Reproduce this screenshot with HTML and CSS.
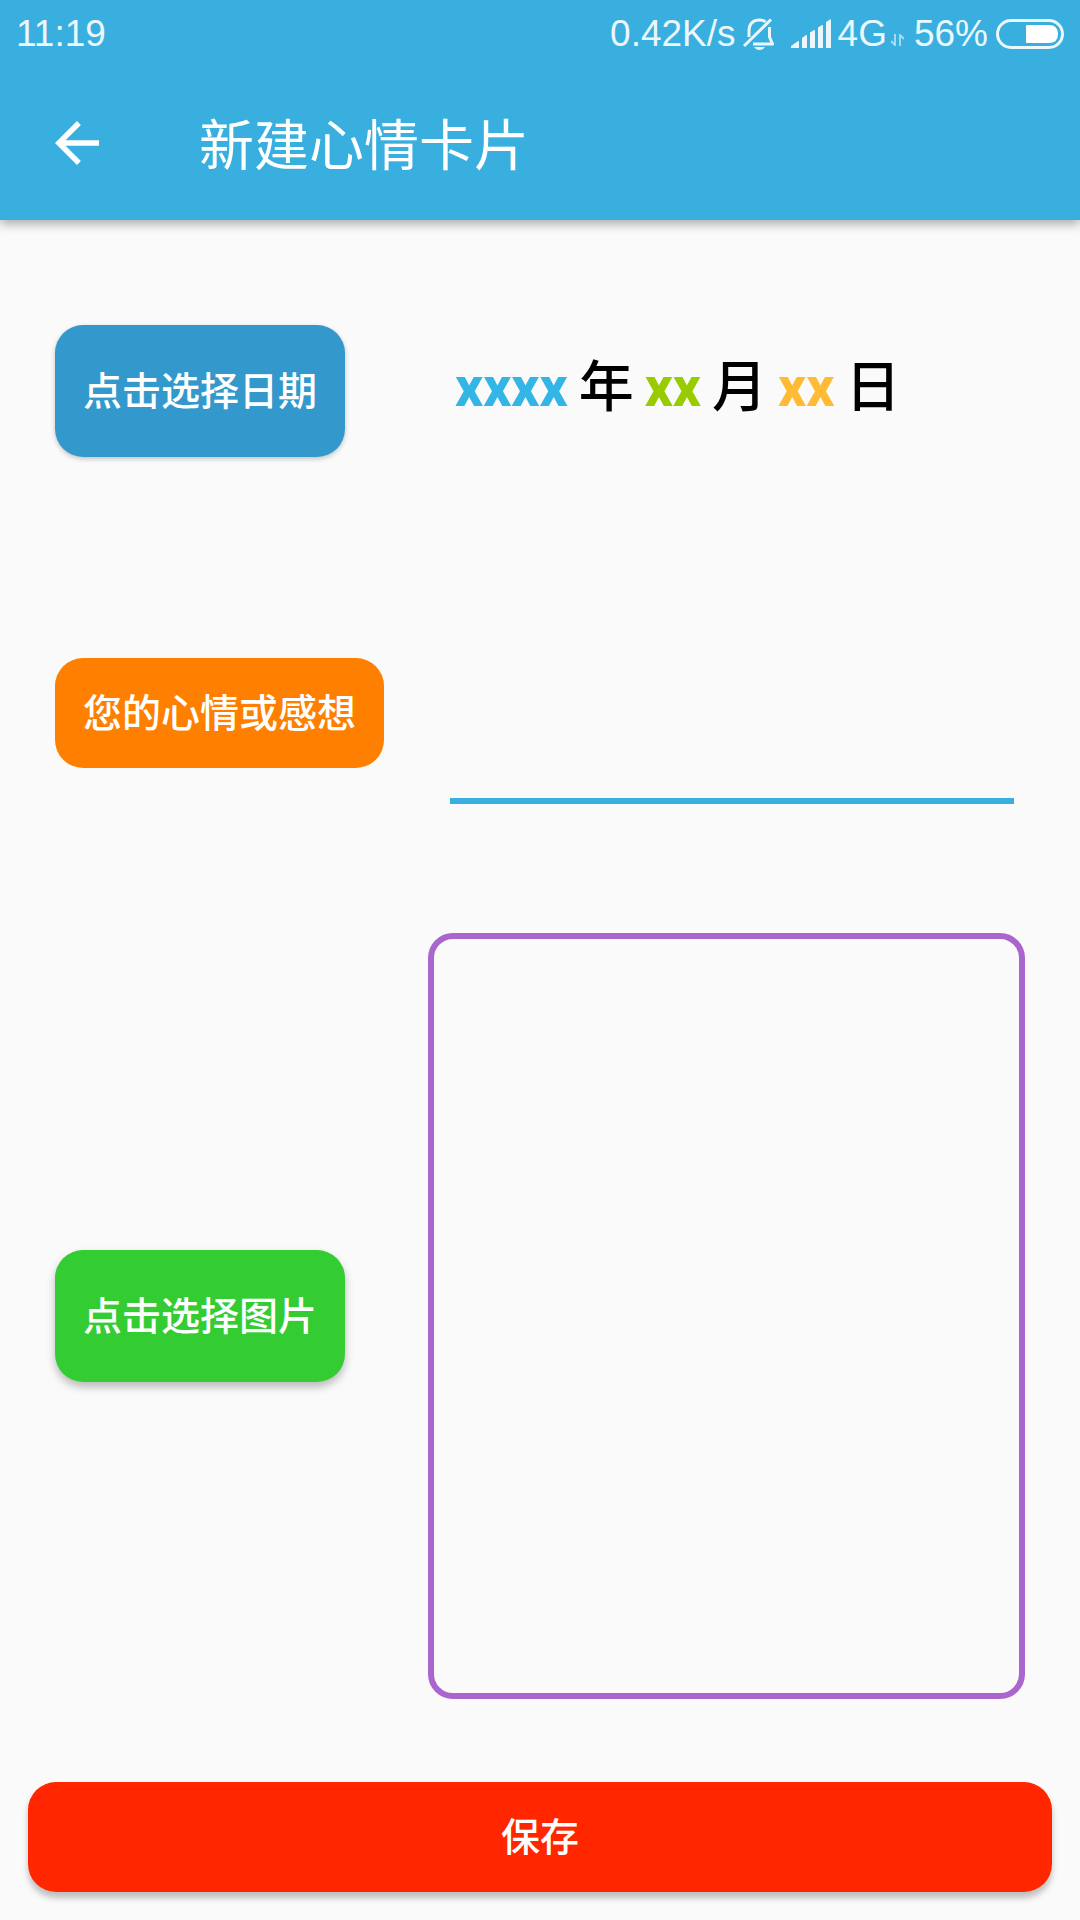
FILE: index.html
```html
<!DOCTYPE html>
<html lang="zh-CN">
<head>
<meta charset="utf-8">
<meta name="viewport" content="width=device-width, initial-scale=1">
<title>新建心情卡片</title>
<link rel="stylesheet" href="styles.css">
</head>
<body>
<header class="app-bar">
  <div class="status-bar">
    <time class="clock">11:19</time>
    <div class="indicators">
      <span>0.42K/s</span>
      <svg class="bell" width="32" height="32" viewBox="0 0 32 32" fill="none" stroke="currentColor" stroke-width="3" aria-hidden="true">
        <path d="M6 19V13C6 6 10 2 16.500 2C19 2 21 2.500 22.500 4M26.500 9V19L29.500 26H10" stroke-linejoin="round"/>
        <path d="M1 28L28 1.500"/>
        <path d="M11 29H22Q20 32 16.500 32Q13 32 11 29Z" fill="currentColor" stroke="none"/>
      </svg>
      <svg class="signal" width="40" height="30" viewBox="0 0 40 30" fill="currentColor" aria-hidden="true">
        <path d="M0 29V27L7 22Q8 22 8 23V29ZM11 29V19L15 16Q16 16 16 17V29ZM19 29V13.500L23 11Q24 10.500 24 12V29ZM27 29V8.500L31 6Q32 5.500 32 7V29ZM35 29V3L39 .5Q40 0 40 1V29Z"/>
      </svg>
      <span>4G</span>
      <svg class="data" width="13" height="12" viewBox="0 0 13 12" fill="none" stroke="currentColor" stroke-width="2" aria-hidden="true">
        <path d="M4 0V11L0 7M9 12V1L13 5"/>
      </svg>
      <span>56%</span>
      <svg class="battery" width="68" height="30" viewBox="0 0 68 30" aria-hidden="true">
        <rect x="1.500" y="1.500" width="65" height="27" rx="13.500" fill="none" stroke="currentColor" stroke-width="3"/>
        <path d="M31 6H53Q62 6 62 15T53 24H31Q30 24 30 23V7Q30 6 31 6Z" fill="#fff"/>
      </svg>
    </div>
  </div>
  <div class="toolbar">
    <button class="back" type="button" aria-label="返回">
      <svg width="66" height="66" viewBox="0 0 24 24" fill="currentColor" aria-hidden="true"><path d="M20 11H7.830l5.590-5.590L12 4l-8 8 8 8 1.410-1.410L7.830 13H20v-2z"/></svg>
    </button>
    <h1 class="title">新建心情卡片</h1>
  </div>
</header>
<form class="card-form">
  <div class="row">
    <div class="side"><button class="chip chip-date" type="button">点击选择日期</button></div>
    <p class="date">
      <span class="year">xxxx</span><span>年</span><span class="month">xx</span><span>月</span><span class="day">xx</span><span>日</span>
    </p>
  </div>
  <div class="row row-mood">
    <div class="side"><label class="chip chip-mood" for="mood">您的心情或感想</label></div>
    <textarea class="mood" id="mood"></textarea>
  </div>
  <div class="row row-photo">
    <div class="side"><button class="chip chip-photo" type="button">点击选择图片</button></div>
    <div class="preview"></div>
  </div>
  <button class="save" type="submit">保存</button>
</form>
</body>
</html>
```
FILE: styles.css
```css
* {
  box-sizing: border-box;
}

body {
  margin: 0;
  min-height: 100vh;
  display: flex;
  flex-direction: column;
  background: #fafafa;
  color: #000;
  font-family: Roboto, "Noto Sans CJK SC", sans-serif;
}

button,
textarea {
  border: 0;
  font: inherit;
}

svg {
  display: block;
}

.app-bar {
  background: #38afdf;
  color: #fff;
  box-shadow: 0 4px 10px rgba(0, 0, 0, 0.32);
}

.status-bar {
  height: 66px;
  padding: 2px 16px 0;
  display: flex;
  align-items: center;
  justify-content: space-between;
  color: #ebf7fc;
  font: 37px/44px "Liberation Sans", Arial, sans-serif;
}

.indicators {
  display: flex;
  align-items: center;
}

.bell {
  margin: 0 16px 0 7px;
}

.signal {
  margin-right: 7px;
}

.data {
  margin: 12px 10px 0 4px;
  opacity: 0.6;
}

.battery {
  margin-left: 8px;
}

.toolbar {
  height: 154px;
  padding-left: 44px;
  display: flex;
  align-items: center;
  gap: 89px;
}

.back {
  padding: 0;
  background: none;
  color: inherit;
}

.title {
  margin: 0;
  padding-top: 6px;
  font-size: 55px;
  line-height: 80px;
  font-weight: 400;
}

.card-form {
  flex: 1;
  padding: 105px 28px 28px;
  display: flex;
  flex-direction: column;
}

.row {
  padding: 0 27px;
  display: grid;
  grid-template-columns: 373px 1fr;
  align-items: center;
}

.side {
  display: flex;
}

.chip,
.save {
  border-radius: 28px;
  color: #fff;
  font-size: 39px;
  line-height: 58px;
  font-weight: 500;
}

.chip {
  padding: 38px 28px 36px;
}

.chip-date {
  background: #3399cc;
  box-shadow: 0 2px 5px rgba(0, 0, 0, 0.22);
}

.chip-mood {
  padding: 27px 28px 25px;
  background: #ff8000;
}

.chip-photo {
  background: #33cc33;
  box-shadow: 0 5px 8px rgba(0, 0, 0, 0.26);
}

.date {
  margin: 0;
  padding: 0 0 8px 27px;
  display: flex;
  align-items: baseline;
  gap: 11px;
  font-size: 55px;
  line-height: 64px;
  font-weight: 500;
}

.year,
.month,
.day {
  font-weight: 800;
}

.year {
  color: #33b5e5;
}

.month {
  color: #99cc00;
}

.day {
  color: #ffbb33;
}

.row-mood {
  margin-top: 165px;
}

.mood {
  height: 182px;
  margin: 0 11px 0 22px;
  padding: 60px 0 10px;
  border-bottom: 6px solid #38afdf;
  outline: 0;
  resize: none;
  background: none;
  font-size: 48px;
}

.row-photo {
  flex: 1;
  margin-top: 129px;
}

.preview {
  align-self: stretch;
  border: 6px solid #aa66cc;
  border-radius: 25px;
}

.save {
  margin-top: 83px;
  padding: 27px 26px 25px;
  background: #ff2600;
  box-shadow: 0 6px 6px rgba(0, 0, 0, 0.24);
}
```
